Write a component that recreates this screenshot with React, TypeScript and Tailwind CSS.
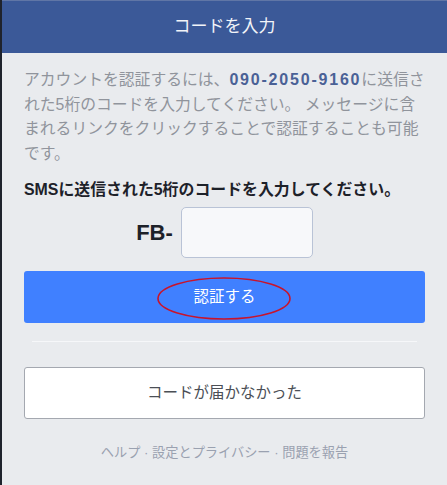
export default function App() {
  return (
    <div
      className="min-h-[485px] border-l-2 border-[#1f232c] bg-[#e9ebee]"
      style={{ fontFamily: '"Liberation Sans", "Noto Sans CJK JP", sans-serif' }}
    >
      {/* Header */}
      <header className="flex h-[53px] items-center justify-center border-t border-[#6076a6] bg-[#3b5998]">
        <h1 className="text-[17px] text-[#f2f4f8]">コードを入力</h1>
      </header>

      <div className="flex flex-col px-[22px]">
        {/* Description */}
        <div className="mt-[15px] text-[15.8px] leading-[24.7px] text-[#90949c]">
          <div className="whitespace-nowrap">
            アカウントを認証するには、
            <span className="text-[16px] font-bold tracking-[1.8px] text-[#4a6196]">090-2050-9160</span>
            に送信さ
          </div>
          <div className="whitespace-nowrap">れた5桁のコードを入力してください。 メッセージに含</div>
          <div className="whitespace-nowrap">まれるリンクをクリックすることで認証することも可能</div>
          <div className="whitespace-nowrap">です。</div>
        </div>

        <p className="mt-[12px] whitespace-nowrap text-[15.9px] leading-[22px] font-bold text-[#1d2129]">
          SMSに送信された5桁のコードを入力してください。
        </p>

        {/* Code input */}
        <div className="mt-[6px] flex items-center justify-center gap-[8px]">
          <span className="text-[22px] font-bold text-[#1d2129]">FB-</span>
          <input
            type="text"
            className="h-[51px] w-[132px] rounded-[5px] border border-[#b9c3d6] bg-[#f7f8fa] outline-none"
          />
        </div>

        {/* Verify button */}
        <button className="relative mt-[13px] flex h-[52px] w-full items-center justify-center rounded-[3px] bg-[#4080ff] text-[15.5px] text-white">
          認証する
          <svg
            className="pointer-events-none absolute left-[132px] top-[5px]"
            width="136"
            height="45"
            viewBox="0 0 136 45"
          >
            <ellipse cx="68" cy="22.5" rx="66" ry="20.5" fill="none" stroke="#c8142c" strokeWidth="1.6" />
          </svg>
        </button>

        <div className="mx-[8px] mt-[18px] h-px bg-[#f6f7f9]" />

        {/* Didn't receive code */}
        <button className="mt-[25px] flex h-[52px] w-full items-center justify-center rounded-[3px] border border-[#a4a8b0] bg-white text-[15.5px] text-[#4b4f56]">
          コードが届かなかった
        </button>

        {/* Footer links */}
        <div className="mt-[25px] text-center text-[13.2px] leading-[18px] text-[#9aa1b0]">
          ヘルプ · 設定とプライバシー · 問題を報告
        </div>
      </div>
    </div>
  );
}
